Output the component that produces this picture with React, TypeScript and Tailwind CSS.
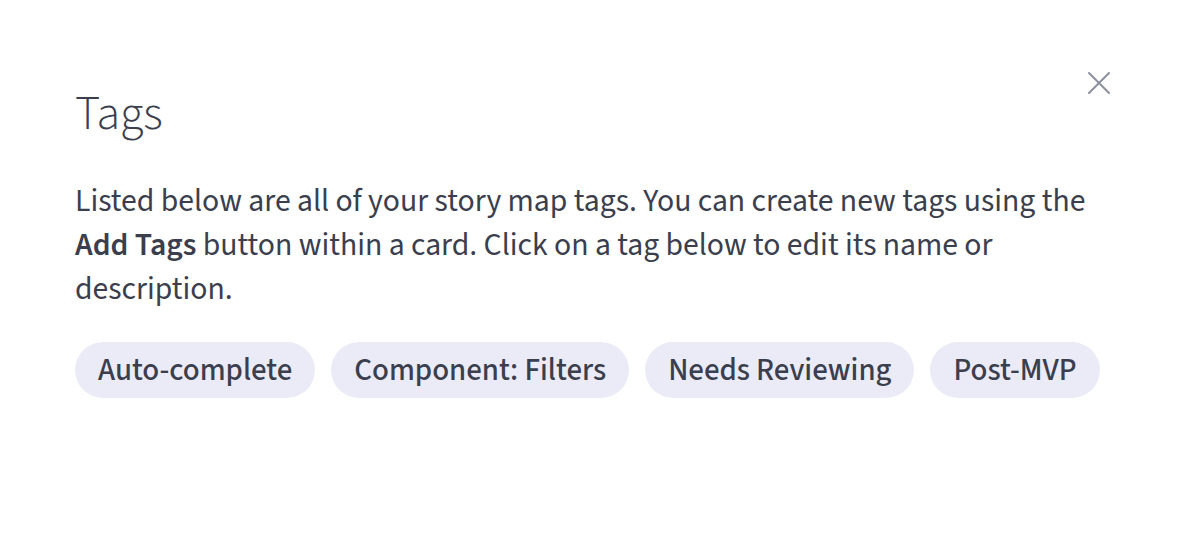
const tags = ['Auto-complete', 'Component: Filters', 'Needs Reviewing', 'Post-MVP']

export default function App() {
  return (
    <div
      className="w-[1188px] h-[540px] bg-white text-[#3b3e4d]"
      style={{ fontFamily: '"Source Sans Pro", "Source Sans 3", Lato, "Noto Sans", sans-serif' }}
    >
      <div className="relative pl-[75px] pr-[80px] pt-[84px]">
        <button className="absolute right-[76px] top-[70px] w-[26px] h-[26px] flex items-center justify-center text-[#8b909c]" aria-label="Close">
          <svg width="24" height="24" viewBox="0 0 24 24" fill="none" stroke="currentColor" strokeWidth="2" strokeLinecap="round">
            <path d="M2 2l20 20M22 2L2 22" />
          </svg>
        </button>
        <h1 className="text-[48px] leading-[60px] font-light text-[#3b3e4d]">Tags</h1>
        <p className="mt-[36px] text-[31.7px] leading-[44px] max-w-[1030px]">
          Listed below are all of your story map tags. You can create new tags using the{' '}
          <b className="font-semibold">Add Tags</b> button within a card. Click on a tag below to edit its name or
          description.
        </p>
        <div className="mt-[30px] flex gap-4">
          {tags.map((tag) => (
            <span key={tag} className="h-[56px] px-[23px] flex items-center rounded-full bg-[#eaebf7] text-[31px] font-medium">
              {tag}
            </span>
          ))}
        </div>
      </div>
    </div>
  )
}
